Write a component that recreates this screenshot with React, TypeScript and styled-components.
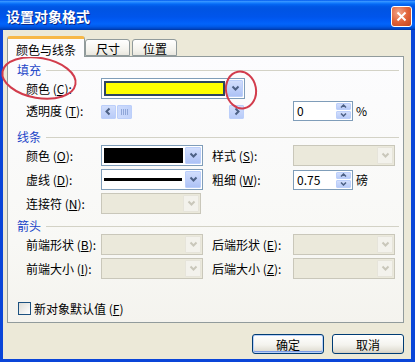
import styled, { createGlobalStyle } from 'styled-components';

const GlobalStyle = createGlobalStyle`
  html, body {
    margin: 0;
    padding: 0;
    background: #fff;
  }
  body {
    font-family: "Noto Sans CJK SC", "Liberation Sans", sans-serif;
    font-size: 12px;
    color: #000;
  }
`;

const Window = styled.div`
  position: relative;
  width: 415px;
  height: 362px;
  display: flex;
  flex-direction: column;
  overflow: hidden;
`;

const TitleBar = styled.div`
  flex: none;
  height: 30px;
  display: flex;
  align-items: center;
  justify-content: space-between;
  padding: 0 3px 0 6px;
  background: linear-gradient(
    to bottom,
    #0058ee 0%,
    #3593ff 5%,
    #1a82ff 9%,
    #0468f4 14%,
    #0058e6 22%,
    #0054e3 30%,
    #0055eb 56%,
    #005bf5 68%,
    #0264fb 80%,
    #005ae9 88%,
    #0048c8 95%,
    #0036a0 100%
  );
`;

const Title = styled.span`
  color: #fff;
  font-weight: bold;
  font-size: 14px;
  line-height: 14px;
  margin-top: 2px;
  text-shadow: 1px 1px 0 #0a2a8c;
`;

const CloseButton = styled.div`
  box-sizing: border-box;
  width: 21px;
  height: 21px;
  margin-top: 3px;
  border: 1px solid #fff;
  border-radius: 3px;
  background: radial-gradient(circle at 35% 30%, #f0a68c 0%, #e2643a 50%, #c2431d 100%);
  display: flex;
  align-items: center;
  justify-content: center;
`;

const Body = styled.div`
  flex: 1;
  display: flex;
  flex-direction: column;
  background: #ece9d8;
  border-left: 3px solid #0a45d8;
  border-right: 4px solid #0a45d8;
  border-bottom: 3px solid #0a45d8;
  padding: 6px 7px 0 4px;
`;

const TabStrip = styled.div`
  display: flex;
  align-items: flex-end;
  height: 20px;
`;

const Tab = styled.div<{ $active?: boolean }>`
  box-sizing: border-box;
  position: relative;
  z-index: ${p => (p.$active ? 2 : 1)};
  height: ${p => (p.$active ? '21px' : '17px')};
  margin-bottom: ${p => (p.$active ? '-1px' : '0')};
  margin-right: ${p => (p.$active ? '0' : '2px')};
  padding: ${p => (p.$active ? '3px 8px 0' : '1px 9px 0 10px')};
  border: 1px solid #919b9c;
  border-bottom: ${p => (p.$active ? 'none' : '1px solid #919b9c')};
  border-top: ${p => (p.$active ? '3px solid #f7b847' : '1px solid #919b9c')};
  border-radius: 3px 3px 0 0;
  background: ${p => (p.$active ? '#fcfcfe' : 'linear-gradient(#ffffff, #f3f2ec 70%, #e9e7df)')};
  line-height: 15px;
  white-space: nowrap;
`;

const Panel = styled.div`
  box-sizing: border-box;
  height: 267px;
  border: 1px solid #919b9c;
  background: linear-gradient(#fcfcfe, #f8f8f5 70%, #f4f3ee);
  padding: 7px 4px 0 9px;
  display: flex;
  flex-direction: column;
`;

const GroupHeader = styled.div<{ $gap: number }>`
  display: flex;
  align-items: center;
  height: 12px;
  margin-top: ${p => p.$gap}px;
  color: #1c46c8;
  line-height: 12px;

  &::after {
    content: '';
    flex: 1;
    height: 1px;
    margin-left: 5px;
    background: #d3d2c6;
  }
`;

const FieldGrid = styled.div<{ $cols: string; $rowGap: number }>`
  display: grid;
  grid-template-columns: ${p => p.$cols};
  grid-auto-rows: 21px;
  row-gap: ${p => p.$rowGap}px;
  align-items: center;
  margin: 2px 0 0 9px;
`;

const Label = styled.span`
  white-space: nowrap;
  line-height: 12px;
`;

const Unit = styled(Label)`
  margin-left: 3px;
`;

const Key = styled.u`
  text-underline-offset: 1px;
`;

const Combo = styled.div<{ $disabled?: boolean; $width: number }>`
  box-sizing: border-box;
  width: ${p => p.$width}px;
  height: 21px;
  padding: 1px;
  display: flex;
  gap: 2px;
  border: 1px solid ${p => (p.$disabled ? '#c9c7ba' : '#7f9db9')};
  background: ${p => (p.$disabled ? '#ebe9db' : '#fff')};
`;

const ComboValue = styled.div`
  flex: 1;
  display: flex;
  align-items: center;
  padding: 1px 0 1px 1px;
`;

const Swatch = styled.div<{ $color: string; $focused?: boolean }>`
  box-sizing: border-box;
  flex: 1;
  height: 100%;
  background: ${p => p.$color};
  border: ${p => (p.$focused ? '2px solid #2d4660' : 'none')};
`;

const LineSample = styled.div`
  flex: 1;
  height: 3px;
  margin-right: 1px;
  background: #000;
`;

const DropButton = styled.div<{ $disabled?: boolean }>`
  box-sizing: border-box;
  width: 16px;
  display: flex;
  align-items: center;
  justify-content: center;
  border: 1px solid ${p => (p.$disabled ? '#e6e4da' : '#bccffa')};
  border-radius: 1px;
  background: ${p => (p.$disabled ? '#f3f2ec' : 'linear-gradient(#d2defc, #bccdf9 60%, #adc2f5)')};
  color: ${p => (p.$disabled ? '#c9c7ba' : '#4d6185')};
`;

const ScrollBar = styled.div`
  width: 143px;
  height: 14px;
  display: flex;
  gap: 1px;
  align-self: center;
  margin-top: 2px;
`;

const ScrollPart = styled.div<{ $grip?: boolean }>`
  box-sizing: border-box;
  width: 15px;
  height: 14px;
  display: flex;
  align-items: center;
  justify-content: center;
  gap: 1px;
  border: 1px solid #bccffa;
  border-radius: 1px;
  background: ${p => (p.$grip ? 'linear-gradient(90deg, #cddbfc, #c1d2fa)' : 'linear-gradient(#d2defc, #b8cbf8)')};
  color: #4d6185;
`;

const GripLine = styled.span`
  width: 1px;
  height: 6px;
  background: #8fa6d8;
`;

const ScrollTrack = styled.div`
  flex: 1;
`;

const Spinner = styled.div`
  box-sizing: border-box;
  width: 60px;
  height: 20px;
  display: flex;
  border: 1px solid #7f9db9;
  background: #fff;
  padding: 1px;
`;

const SpinnerValue = styled.div`
  flex: 1;
  padding-left: 2px;
  line-height: 16px;
`;

const SpinnerButtons = styled.div`
  width: 15px;
  display: flex;
  flex-direction: column;
  gap: 1px;
`;

const SpinnerButton = styled.div`
  box-sizing: border-box;
  flex: 1;
  display: flex;
  align-items: center;
  justify-content: center;
  border: 1px solid #bccffa;
  border-radius: 1px;
  background: linear-gradient(#d2defc, #b8cbf8);
  color: #4d6185;
`;

const InlineField = styled.div`
  display: flex;
  align-items: center;
  gap: 3px;
`;

const CheckRow = styled.label`
  display: flex;
  align-items: center;
  gap: 3px;
  margin: 23px 0 0 1px;
  line-height: 13px;
`;

const CheckBox = styled.span`
  box-sizing: border-box;
  width: 13px;
  height: 13px;
  border: 1px solid #1c5180;
  background: linear-gradient(135deg, #dcdcd7, #ffffff);
`;

const Footer = styled.div`
  display: flex;
  justify-content: flex-end;
  gap: 8px;
  margin-top: 11px;
`;

const PushButton = styled.button<{ $default?: boolean }>`
  box-sizing: border-box;
  width: 72px;
  height: 20px;
  padding: 0;
  border: 1px solid #003c74;
  border-radius: 3px;
  background: linear-gradient(#ffffff, #f4f3ee 55%, #e3e0d6 85%, #d6d0c5);
  font-family: inherit;
  font-size: 12px;
  color: #000;
  box-shadow: ${p =>
    p.$default ? 'inset 0 0 0 1px #b8d0f8, inset 0 -1px 0 1px #7a9ae6' : 'inset 0 -1px 0 0 #d6d0c5'};
`;

const Annotations = styled.svg`
  position: absolute;
  top: 0;
  left: 0;
  pointer-events: none;
`;

const Chevron = ({ dir }: { dir: 'down' | 'up' | 'left' | 'right' }) => {
  const paths = {
    down: 'M1.5 2.5 L4.5 5.5 L7.5 2.5',
    up: 'M1.5 5.5 L4.5 2.5 L7.5 5.5',
    left: 'M5.5 1.5 L2.5 4.5 L5.5 7.5',
    right: 'M3.5 1.5 L6.5 4.5 L3.5 7.5',
  };
  return (
    <svg width="9" height="9" viewBox="0 0 9 9">
      <path d={paths[dir]} fill="none" stroke="currentColor" strokeWidth="2" />
    </svg>
  );
};

const SmallChevron = ({ dir }: { dir: 'up' | 'down' }) => (
  <svg width="7" height="4" viewBox="0 0 7 4">
    <path
      d={dir === 'up' ? 'M1 3.5 L3.5 1 L6 3.5' : 'M1 0.5 L3.5 3 L6 0.5'}
      fill="none"
      stroke="currentColor"
      strokeWidth="1.5"
    />
  </svg>
);

const Field = ({ text, k }: { text: string; k: string }) => (
  <Label>
    {text} (<Key>{k}</Key>):
  </Label>
);

const DropDown = ({
  width,
  disabled,
  children,
}: {
  width: number;
  disabled?: boolean;
  children?: React.ReactNode;
}) => (
  <Combo $width={width} $disabled={disabled}>
    <ComboValue>{children}</ComboValue>
    <DropButton $disabled={disabled}>
      <Chevron dir="down" />
    </DropButton>
  </Combo>
);

const Spin = ({ value }: { value: string }) => (
  <Spinner>
    <SpinnerValue>{value}</SpinnerValue>
    <SpinnerButtons>
      <SpinnerButton>
        <SmallChevron dir="up" />
      </SpinnerButton>
      <SpinnerButton>
        <SmallChevron dir="down" />
      </SpinnerButton>
    </SpinnerButtons>
  </Spinner>
);

export default function App() {
  return (
    <>
      <GlobalStyle />
      <Window>
        <TitleBar>
          <Title>设置对象格式</Title>
          <CloseButton>
            <svg width="11" height="11" viewBox="0 0 11 11">
              <path d="M1.5 1.5 L9.5 9.5 M9.5 1.5 L1.5 9.5" stroke="#fff" strokeWidth="2" />
            </svg>
          </CloseButton>
        </TitleBar>

        <Body>
          <TabStrip>
            <Tab $active>颜色与线条</Tab>
            <Tab>尺寸</Tab>
            <Tab>位置</Tab>
          </TabStrip>

          <Panel>
            <GroupHeader $gap={0}>填充</GroupHeader>
            <FieldGrid $cols="75px 144px 48px 60px auto" $rowGap={1}>
              <Field text="颜色" k="C" />
              <DropDown width={144}>
                <Swatch $color="#ffff00" $focused />
              </DropDown>
              <span />
              <span />
              <span />

              <Field text="透明度" k="T" />
              <ScrollBar>
                <ScrollPart>
                  <Chevron dir="left" />
                </ScrollPart>
                <ScrollPart $grip>
                  <GripLine />
                  <GripLine />
                  <GripLine />
                  <GripLine />
                </ScrollPart>
                <ScrollTrack />
                <ScrollPart>
                  <Chevron dir="right" />
                </ScrollPart>
              </ScrollBar>
              <span />
              <Spin value="0" />
              <Unit>%</Unit>
            </FieldGrid>

            <GroupHeader $gap={10}>线条</GroupHeader>
            <FieldGrid $cols="75px 102px 9px 81px auto" $rowGap={3}>
              <Field text="颜色" k="O" />
              <DropDown width={102}>
                <Swatch $color="#000" />
              </DropDown>
              <span />
              <Field text="样式" k="S" />
              <DropDown width={102} disabled />

              <Field text="虚线" k="D" />
              <DropDown width={102}>
                <LineSample />
              </DropDown>
              <span />
              <Field text="粗细" k="W" />
              <InlineField>
                <Spin value="0.75" />
                <Label>磅</Label>
              </InlineField>

              <Field text="连接符" k="N" />
              <DropDown width={100} disabled />
            </FieldGrid>

            <GroupHeader $gap={6}>箭头</GroupHeader>
            <FieldGrid $cols="75px 102px 9px 81px auto" $rowGap={3}>
              <Field text="前端形状" k="B" />
              <DropDown width={102} disabled />
              <span />
              <Field text="后端形状" k="E" />
              <DropDown width={102} disabled />

              <Field text="前端大小" k="I" />
              <DropDown width={102} disabled />
              <span />
              <Field text="后端大小" k="Z" />
              <DropDown width={102} disabled />
            </FieldGrid>

            <CheckRow>
              <CheckBox />
              <span>
                新对象默认值 (<Key>F</Key>)
              </span>
            </CheckRow>
          </Panel>

          <Footer>
            <PushButton $default>确定</PushButton>
            <PushButton>取消</PushButton>
          </Footer>
        </Body>

        <Annotations width="415" height="362" viewBox="0 0 415 362">
          <ellipse
            cx="39"
            cy="78"
            rx="37"
            ry="20"
            transform="rotate(10 39 78)"
            fill="none"
            stroke="#d23c4c"
            strokeWidth="2"
          />
          <ellipse
            cx="241"
            cy="90"
            rx="15"
            ry="18.5"
            transform="rotate(-10 241 90)"
            fill="none"
            stroke="#d23c4c"
            strokeWidth="2"
          />
        </Annotations>
      </Window>
    </>
  );
}
